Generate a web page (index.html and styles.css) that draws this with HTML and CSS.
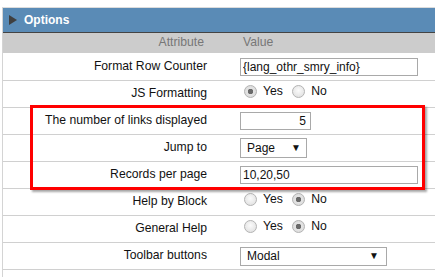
FILE: index.html
```html
<!DOCTYPE html>
<html lang="en">
<head>
    <meta charset="UTF-8">
    <title>Options</title>
    <link rel="stylesheet" href="styles.css">
</head>
<body>
    <!-- Options panel -->
    <div class="panel">
        <div class="panel-title">
            <span class="arrow"></span>
            <span>Options</span>
        </div>

        <table class="options">
            <tr class="head">
                <th class="attr">Attribute</th>
                <th class="value">Value</th>
            </tr>
            <tr>
                <td class="attr">Format Row Counter</td>
                <td class="value"><input type="text" class="text wide" value="{lang_othr_smry_info}"></td>
            </tr>
            <tr>
                <td class="attr">JS Formatting</td>
                <td class="value radios">
                    <label class="radio"><input type="radio" name="js" checked> Yes</label>
                    <label class="radio"><input type="radio" name="js"> No</label>
                </td>
            </tr>
            <tr>
                <td class="attr">The number of links displayed</td>
                <td class="value"><input type="text" class="text small" value="5"></td>
            </tr>
            <tr>
                <td class="attr">Jump to</td>
                <td class="value">
                    <div class="select short"><select><option>Page</option></select></div>
                </td>
            </tr>
            <tr>
                <td class="attr">Records per page</td>
                <td class="value"><input type="text" class="text wide" value="10,20,50"></td>
            </tr>
            <tr>
                <td class="attr">Help by Block</td>
                <td class="value radios">
                    <label class="radio"><input type="radio" name="hb"> Yes</label>
                    <label class="radio"><input type="radio" name="hb" checked> No</label>
                </td>
            </tr>
            <tr>
                <td class="attr">General Help</td>
                <td class="value radios">
                    <label class="radio"><input type="radio" name="gh"> Yes</label>
                    <label class="radio"><input type="radio" name="gh" checked> No</label>
                </td>
            </tr>
            <tr>
                <td class="attr">Toolbar buttons</td>
                <td class="value">
                    <div class="select long"><select><option>Modal</option></select></div>
                </td>
            </tr>
        </table>

        <!-- highlight around the paging settings -->
        <div class="highlight"></div>
    </div>
</body>
</html>
```

FILE: styles.css
```css
/* General Styles */
body {
    margin: 0;
    font-family: "Liberation Sans", Arial, sans-serif;
    font-size: 12.2px;
    color: #111;
    background: #fff;
}

/* Panel */
.panel {
    position: relative;
    margin: 7px 0 0 2px;
    border-top: 1px solid #dcdcdc;
    border-left: 1px solid #d4d4d4;
    height: 269px;
}
.panel-title {
    display: flex;
    align-items: center;
    height: 24px;
    padding-left: 6px;
    background-color: #5a8bb6;
    border-bottom: 1px solid #444;
    color: #fff;
    font-weight: bold;
    font-size: 12px;
}
.arrow {
    width: 0;
    height: 0;
    border-top: 5px solid transparent;
    border-bottom: 5px solid transparent;
    border-left: 8px solid #3f3f3f;
    margin-right: 7px;
}

/* Table */
.options {
    width: 100%;
    border-collapse: collapse;
    table-layout: fixed;
}
.options th {
    height: 18px;
    padding: 0 0 2px;
    background-color: #ccc;
    color: #777;
    font-weight: normal;
    border-bottom: 1px solid #fff;
}
.options td {
    height: 26px;
    padding: 0;
    border-bottom: 1px solid #d0d0d0;
}
.options td.attr,
.options td.radios {
    height: 23px;
    padding-bottom: 3px;
}
.options .attr {
    width: 204px;
    text-align: right;
    padding-right: 25px;
}
.options th.attr {
    width: 201px;
    padding-right: 28px;
}
.options .value {
    text-align: left;
    padding-left: 8px;
}
.options th.value {
    padding-left: 11px;
}

/* Inputs */
.text {
    box-sizing: border-box;
    height: 18px;
    margin: 0;
    padding: 0 2px;
    border: 1px solid #a9a9a9;
    font-family: inherit;
    font-size: 12px;
    color: #111;
    vertical-align: middle;
}
.text.wide {
    width: 178px;
}
.text.small {
    width: 71px;
    text-align: right;
    padding-right: 4px;
}
.select {
    position: relative;
    display: inline-block;
    vertical-align: middle;
}
.select select {
    appearance: none;
    -webkit-appearance: none;
    box-sizing: border-box;
    height: 20px;
    margin: 0;
    padding: 0 0 0 6px;
    border: 1px solid #a9a9a9;
    background: #fff;
    font-family: inherit;
    font-size: 12px;
    color: #111;
}
.select::after {
    content: "\25BC";
    position: absolute;
    right: 6px;
    top: 4px;
    font-size: 10px;
    color: #111;
    pointer-events: none;
}
.select.short select {
    width: 67px;
}
.select.long select {
    width: 147px;
    height: 19px;
}
.select.long::after {
    right: 8px;
    top: 3px;
}

/* Radios */
.radio {
    display: inline-flex;
    align-items: center;
    margin-right: 6px;
    margin-left: 4px;
}
.radio + .radio {
    margin-left: 0;
}
.radio input {
    appearance: none;
    -webkit-appearance: none;
    width: 13px;
    height: 13px;
    margin: 0 6px 0 0;
    border: 1px solid #b4b4b4;
    border-radius: 50%;
    background: radial-gradient(circle at 50% 40%, #fbfbfb, #dcdcdc);
}
.radio input:checked {
    background: radial-gradient(circle, #6a6a6a 0, #6a6a6a 2.5px, #e4e4e4 3px, #d8d8d8);
}

/* Highlight */
.highlight {
    position: absolute;
    left: 27px;
    top: 97px;
    width: 389px;
    height: 79px;
    border: 3px solid #f00;
    box-shadow: 2px 2px 2px rgba(0, 0, 0, 0.35);
}
```
